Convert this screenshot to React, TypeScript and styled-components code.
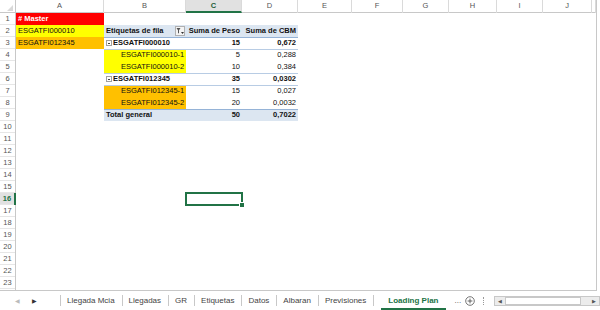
import React from 'react';
import styled, { createGlobalStyle, css } from 'styled-components';

const GREEN = '#217346';
const COLS = '16px 88px 82px 56px 56px 54px 51px 46px 48px 46px 49px 1fr';
const LETTERS = ['A', 'B', 'C', 'D', 'E', 'F', 'G', 'H', 'I', 'J', ''];

const GlobalStyle = createGlobalStyle`
  * { box-sizing: border-box; }
  body {
    margin: 0;
    background: #fff;
    font-family: 'Liberation Sans', Arial, sans-serif;
  }
`;

const Window = styled.div`
  width: 600px;
  height: 310px;
  display: flex;
  flex-direction: column;
  overflow: hidden;
  background: #fff;
`;

const SheetArea = styled.div`
  height: 291px;
  width: 597px;
  flex-shrink: 0;
  border-right: 1px solid #c8c8c8;
  border-bottom: 1px solid #c8c8c8;
  overflow: hidden;
`;

const HeaderRow = styled.div`
  display: grid;
  grid-template-columns: ${COLS};
  height: 13px;
  border-bottom: 1px solid #c8c8c8;
`;

const Corner = styled.div`
  position: relative;
  border-right: 1px solid #c8c8c8;
  &::after {
    content: '';
    position: absolute;
    right: 2px;
    bottom: 2px;
    border-left: 6px solid transparent;
    border-bottom: 6px solid #d9d9d9;
  }
`;

const ColHead = styled.div<{ $active?: boolean }>`
  font-size: 7.5px;
  line-height: 12px;
  text-align: center;
  color: #555;
  border-right: 1px solid #dadada;
  ${(p) =>
    p.$active &&
    css`
      background: #e1e1e1;
      color: #1e5c38;
      font-weight: bold;
      border-bottom: 2px solid ${GREEN};
      line-height: 11px;
    `}
`;

const Row = styled.div`
  display: grid;
  grid-template-columns: ${COLS};
  height: 12px;
`;

const RowHead = styled.div<{ $active?: boolean }>`
  font-size: 7.5px;
  line-height: 12px;
  text-align: center;
  color: #555;
  border-right: 1px solid #c8c8c8;
  box-shadow: inset 0 -1px 0 #e6e6e6;
  ${(p) =>
    p.$active &&
    css`
      background: #e1e1e1;
      color: ${GREEN};
      font-weight: bold;
      border-right: 2px solid ${GREEN};
    `}
`;

const Cell = styled.div<{
  $fill?: string;
  $bold?: boolean;
  $right?: boolean;
  $indent?: number;
  $color?: string;
  $line?: string;
  $selected?: boolean;
}>`
  position: relative;
  display: flex;
  align-items: center;
  justify-content: ${(p) => (p.$right ? 'flex-end' : 'flex-start')};
  padding: 0 2px 0 ${(p) => 2 + (p.$indent || 0)}px;
  font-size: 7.5px;
  line-height: 12px;
  white-space: nowrap;
  overflow: visible;
  color: ${(p) => p.$color || '#111'};
  font-weight: ${(p) => (p.$bold ? 'bold' : 'normal')};
  background: ${(p) => p.$fill || 'transparent'};
  box-shadow: ${(p) => (p.$line ? `inset 0 1px 0 ${p.$line}` : 'none')};
  ${(p) =>
    p.$selected &&
    css`
      outline: 2px solid ${GREEN};
      outline-offset: -1px;
      z-index: 1;
      &::after {
        content: '';
        position: absolute;
        right: -3px;
        bottom: -3px;
        width: 4px;
        height: 4px;
        background: ${GREEN};
        border: 1px solid #fff;
      }
    `}
`;

const Collapse = styled.span`
  display: inline-block;
  width: 6px;
  height: 6px;
  margin-right: 1px;
  border: 1px solid #a0a0a0;
  background: #fff;
  position: relative;
  &::after {
    content: '';
    position: absolute;
    left: 1px;
    right: 1px;
    top: 2px;
    height: 1px;
    background: #444;
  }
`;

const FilterButton = styled.span`
  position: absolute;
  right: 1px;
  top: 1px;
  width: 10px;
  height: 10px;
  border: 1px solid #b0b0b0;
  background: #f4f4f4;
  display: flex;
  align-items: center;
  justify-content: center;
`;

const TabBar = styled.div`
  flex: 1;
  display: flex;
  align-items: stretch;
  font-size: 8px;
  color: #444;
  white-space: nowrap;
`;

const Nav = styled.div`
  width: 60px;
  flex-shrink: 0;
  display: flex;
  align-items: center;
  gap: 12px;
  padding-left: 15px;
  font-size: 6px;
`;

const Arrow = styled.span<{ $dim?: boolean }>`
  color: ${(p) => (p.$dim ? '#bbb' : '#333')};
`;

const Tab = styled.div<{ $active?: boolean }>`
  flex-shrink: 0;
  display: flex;
  align-items: center;
  padding: 0 7px;
  position: relative;
  &::before {
    content: '';
    position: absolute;
    left: 0;
    top: 4px;
    bottom: 4px;
    border-left: 1px solid #c8c8c8;
  }
  ${(p) =>
    p.$active &&
    css`
      color: ${GREEN};
      font-weight: bold;
      padding: 0 7px;
      margin-left: 8px;
      box-shadow: inset 0 -2px 0 ${GREEN};
      &::before {
        left: -8px;
      }
    `}
`;

const Extras = styled.div`
  flex-shrink: 0;
  display: flex;
  align-items: center;
  gap: 4px;
  padding-left: 9px;
  color: #555;
`;

const Splitter = styled.span`
  width: 1px;
  height: 8px;
  margin: 0 10px 0 4px;
  border-left: 1px dotted #999;
`;

const HScroll = styled.div`
  flex: 1;
  min-width: 0;
  display: flex;
  align-items: center;
  height: 10px;
  margin-top: 5px;
  border: 1px solid #c8c8c8;
  background: #ececec;
`;

const ScrollArrow = styled.span`
  width: 10px;
  flex-shrink: 0;
  font-size: 5px;
  text-align: center;
  color: #555;
`;

const Thumb = styled.div`
  width: 76px;
  flex-shrink: 1;
  height: 8px;
  background: #fff;
  border: 1px solid #c8c8c8;
`;

const Track = styled.span`
  flex: 1;
`;

type CellSpec = {
  text?: React.ReactNode;
  fill?: string;
  bold?: boolean;
  right?: boolean;
  indent?: number;
  color?: string;
  line?: string;
  filter?: boolean;
};

const YELLOW = '#ffff00';
const ORANGE = '#ffc000';
const HEAD = '#dce6f1';
const LINE = '#b8cce4';
const DARK_LINE = '#95b3d7';

const group = (label: string) => (
  <>
    <Collapse />
    {label}
  </>
);

const FilterIcon = () => (
  <svg width="8" height="8" viewBox="0 0 8 8">
    <path d="M0.5 1h4L3 3.2V6L2 6.5V3.2z" fill="#555" />
    <path d="M5 5h3L6.5 7z" fill="#333" />
  </svg>
);

const data: Record<number, Record<number, CellSpec>> = {
  1: { 0: { text: '# Master', fill: '#ff0000', color: '#fff', bold: true } },
  2: {
    0: { text: 'ESGATFI000010', fill: YELLOW },
    1: { text: 'Etiquetas de fila', fill: HEAD, bold: true, filter: true },
    2: { text: 'Suma de Peso', fill: HEAD, bold: true, right: true },
    3: { text: 'Suma de CBM', fill: HEAD, bold: true, right: true },
  },
  3: {
    0: { text: 'ESGATFI012345', fill: ORANGE },
    1: { text: group('ESGATFI000010'), bold: true, line: DARK_LINE },
    2: { text: '15', bold: true, right: true, line: DARK_LINE },
    3: { text: '0,672', bold: true, right: true, line: DARK_LINE },
  },
  4: {
    1: { text: 'ESGATFI000010-1', fill: YELLOW, indent: 15, line: LINE },
    2: { text: '5', right: true, line: LINE },
    3: { text: '0,288', right: true, line: LINE },
  },
  5: {
    1: { text: 'ESGATFI000010-2', fill: YELLOW, indent: 15 },
    2: { text: '10', right: true },
    3: { text: '0,384', right: true },
  },
  6: {
    1: { text: group('ESGATFI012345'), bold: true, line: LINE },
    2: { text: '35', bold: true, right: true, line: LINE },
    3: { text: '0,0302', bold: true, right: true, line: LINE },
  },
  7: {
    1: { text: 'ESGATFI012345-1', fill: ORANGE, indent: 15, line: LINE },
    2: { text: '15', right: true, line: LINE },
    3: { text: '0,027', right: true, line: LINE },
  },
  8: {
    1: { text: 'ESGATFI012345-2', fill: ORANGE, indent: 15 },
    2: { text: '20', right: true },
    3: { text: '0,0032', right: true },
  },
  9: {
    1: { text: 'Total general', fill: HEAD, bold: true, line: DARK_LINE },
    2: { text: '50', fill: HEAD, bold: true, right: true, line: DARK_LINE },
    3: { text: '0,7022', fill: HEAD, bold: true, right: true, line: DARK_LINE },
  },
};

const SELECTED = { row: 16, col: 2 };
const tabs = ['Llegada Mcia', 'Llegadas', 'GR', 'Etiquetas', 'Datos', 'Albaran', 'Previsiones'];

export default function App() {
  const rows = Array.from({ length: 24 }, (_, i) => i + 1);

  return (
    <Window>
      <GlobalStyle />
      <SheetArea>
        <HeaderRow>
          <Corner />
          {LETTERS.map((l, i) => (
            <ColHead key={i} $active={i === SELECTED.col}>
              {l}
            </ColHead>
          ))}
        </HeaderRow>
        {rows.map((r) => (
          <Row key={r}>
            <RowHead $active={r === SELECTED.row}>{r}</RowHead>
            {LETTERS.map((_, c) => {
              const spec = data[r]?.[c] || {};
              return (
                <Cell
                  key={c}
                  $fill={spec.fill}
                  $bold={spec.bold}
                  $right={spec.right}
                  $indent={spec.indent}
                  $color={spec.color}
                  $line={spec.line}
                  $selected={r === SELECTED.row && c === SELECTED.col}
                >
                  {spec.text}
                  {spec.filter && (
                    <FilterButton>
                      <FilterIcon />
                    </FilterButton>
                  )}
                </Cell>
              );
            })}
          </Row>
        ))}
      </SheetArea>
      <TabBar>
        <Nav>
          <Arrow $dim>◀</Arrow>
          <Arrow>▶</Arrow>
        </Nav>
        {tabs.map((t) => (
          <Tab key={t}>{t}</Tab>
        ))}
        <Tab $active>Loading Plan</Tab>
        <Extras>
          <span>...</span>
          <svg width="10" height="10" viewBox="0 0 10 10">
            <circle cx="5" cy="5" r="4.3" fill="none" stroke="#666" strokeWidth="0.9" />
            <path d="M5 2.6v4.8M2.6 5h4.8" stroke="#555" strokeWidth="0.9" />
          </svg>
          <Splitter />
        </Extras>
        <HScroll>
          <ScrollArrow>◀</ScrollArrow>
          <Thumb />
          <Track />
          <ScrollArrow>▶</ScrollArrow>
        </HScroll>
      </TabBar>
    </Window>
  );
}
